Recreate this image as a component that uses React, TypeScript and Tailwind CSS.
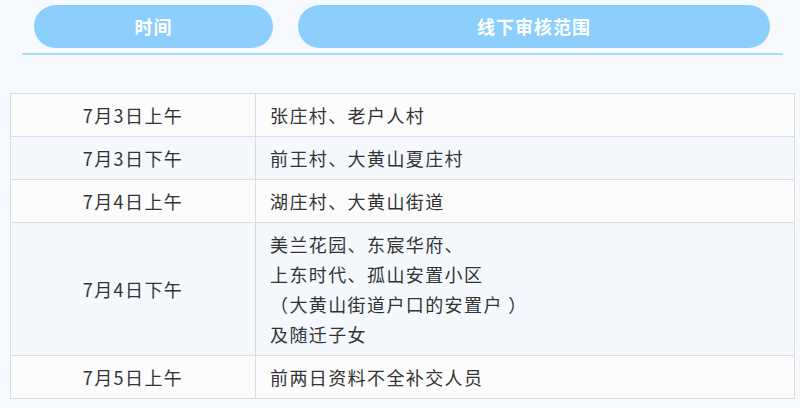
import React from "react";

interface Row {
  time: string;
  lines: string[];
}

const rows: Row[] = [
  { time: "7月3日上午", lines: ["张庄村、老户人村"] },
  { time: "7月3日下午", lines: ["前王村、大黄山夏庄村"] },
  { time: "7月4日上午", lines: ["湖庄村、大黄山街道"] },
  {
    time: "7月4日下午",
    lines: ["美兰花园、东宸华府、", "上东时代、孤山安置小区", "（大黄山街道户口的安置户 ）", "及随迁子女"],
  },
  { time: "7月5日上午", lines: ["前两日资料不全补交人员"] },
];

const font = { fontFamily: '"Noto Sans CJK SC", "Noto Sans", sans-serif' };

const App = () => {
  return (
    <div className="w-[800px] h-[408px] bg-[#f6fafe] overflow-hidden" style={font}>
      {/* header pills */}
      <div className="flex pt-[5px] pl-[34px] gap-[25px]">
        <div className="w-[239px] h-[43px] rounded-full bg-[#8ccffd] flex items-center justify-center text-white font-bold text-[18px] tracking-[1px]">
          时间
        </div>
        <div className="w-[472px] h-[43px] rounded-full bg-[#8ccffd] flex items-center justify-center text-white font-bold text-[18px] tracking-[1px]">
          线下审核范围
        </div>
      </div>
      <div className="ml-[22px] mt-[5px] w-[761px] h-[2px] bg-[#abdcf6]" />

      {/* table */}
      <div className="ml-[10px] mt-[38px] w-[785px] border border-[#dcdcdc] text-[18px] text-[#333] tracking-[1.4px]">
        {rows.map((row, i) => (
          <div
            key={row.time}
            className={`flex ${i > 0 ? "border-t border-[#dcdcdc]" : ""} ${i % 2 === 1 ? "bg-[#f5f9fe]" : "bg-[#fcfcfc]"}`}
          >
            <div className="w-[245px] flex items-center justify-center border-r border-[#dcdcdc] leading-[30px]">
              {row.time}
            </div>
            <div className="flex-1 pl-[14px] py-[6px] leading-[30px]">
              {row.lines.map((l) => (
                <div key={l}>{l}</div>
              ))}
            </div>
          </div>
        ))}
      </div>
    </div>
  );
};

export default App;
